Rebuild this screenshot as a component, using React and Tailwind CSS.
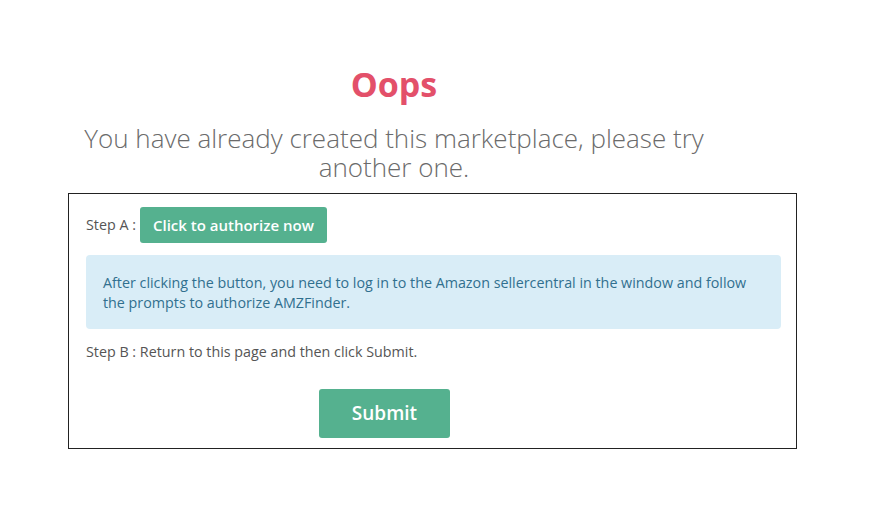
import React from 'react';

export default function App() {
    return (
        <div className="min-h-screen bg-white font-['Open_Sans',sans-serif]">
            <div className="ml-[68px] w-[729px] pt-[64px]">
                {/* Header */}
                <div className="w-[652px] text-center">
                    <h1 className="text-[34px] leading-[40px] font-bold text-[#e3506a]">Oops</h1>
                    <p className="mt-[20px] text-[26px] leading-[29px] font-light text-[#6b6b6b]">
                        You have already created this marketplace, please try another one.
                    </p>
                </div>

                {/* Steps */}
                <div className="mt-[11px] border border-[#222] px-[17px] pt-[13px] pb-[10px]">
                    <div className="flex items-center">
                        <span className="text-[14.3px] text-[#555]">Step A :</span>
                        <button className="ml-[4px] h-[36px] w-[187px] rounded-[3px] bg-[#55b18f] text-[15px] font-semibold text-white">
                            Click to authorize now
                        </button>
                    </div>

                    <div className="mt-[12px] w-[695px] rounded-[4px] bg-[#d9edf7] pl-[17px] pr-[20px] pt-[18px] pb-[16px] text-[14.3px] leading-[20px] text-[#31708f]">
                        After clicking the button, you need to log in to the Amazon sellercentral in the window and follow the prompts to authorize AMZFinder.
                    </div>

                    <p className="mt-[13px] text-[14.3px] leading-[20px] text-[#555]">
                        Step B : Return to this page and then click Submit.
                    </p>

                    <button className="ml-[233px] mt-[27px] block h-[49px] w-[131px] rounded-[3px] bg-[#55b18f] text-[19px] font-semibold text-white">
                        Submit
                    </button>
                </div>
            </div>
        </div>
    );
}
